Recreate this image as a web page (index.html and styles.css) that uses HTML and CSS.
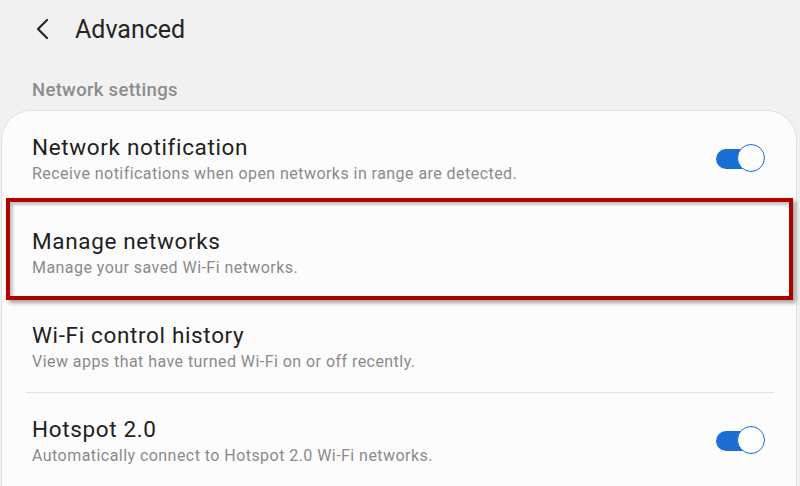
FILE: index.html
```html
<!DOCTYPE html>
<html lang="en">
<head>
    <meta charset="UTF-8">
    <meta name="viewport" content="width=device-width, initial-scale=1.0">
    <title>Advanced</title>
    <link rel="stylesheet" href="styles.css">
</head>
<body>
    <!-- Thanh tiêu đề -->
    <header class="top-bar">
        <svg class="back" width="16" height="24" viewBox="0 0 16 24">
            <path d="M13 3 L4 12 L13 21" fill="none" stroke="#262626" stroke-width="2.2" stroke-linecap="round" stroke-linejoin="round"/>
        </svg>
        <span class="title">Advanced</span>
    </header>

    <div class="section-label">Network settings</div>

    <!-- Danh sách cài đặt -->
    <div class="card">
        <div class="row">
            <div class="text">
                <div class="row-title">Network notification</div>
                <div class="row-sub">Receive notifications when open networks in range are detected.</div>
            </div>
            <div class="switch"><span class="thumb"></span></div>
        </div>

        <div class="row highlighted">
            <div class="text">
                <div class="row-title">Manage networks</div>
                <div class="row-sub">Manage your saved Wi-Fi networks.</div>
            </div>
            <div class="mark"></div>
        </div>

        <div class="row divided">
            <div class="text">
                <div class="row-title">Wi-Fi control history</div>
                <div class="row-sub">View apps that have turned Wi-Fi on or off recently.</div>
            </div>
        </div>

        <div class="row">
            <div class="text">
                <div class="row-title">Hotspot 2.0</div>
                <div class="row-sub">Automatically connect to Hotspot 2.0 Wi-Fi networks.</div>
            </div>
            <div class="switch"><span class="thumb"></span></div>
        </div>
    </div>
</body>
</html>
```

FILE: styles.css
```css
/* Kiểu dáng cơ bản */
body {
    margin: 0;
    width: 800px;
    height: 486px;
    overflow: hidden;
    background: #f1f1f1;
    font-family: Roboto, "Liberation Sans", sans-serif;
    color: #222;
}

/* Thanh tiêu đề */
.top-bar {
    height: 58px;
    display: flex;
    align-items: center;
    padding-left: 34px;
}

.back {
    margin-right: 25px;
}

.title {
    font-size: 25px;
    color: #252525;
}

.section-label {
    box-sizing: border-box;
    padding: 21px 32px 0;
    height: 52px;
    font-size: 18.5px;
    letter-spacing: 0.3px;
    font-weight: 500;
    color: #8c8c8c;
}

/* Thẻ danh sách */
.card {
    margin: 0 3px 0 1px;
    background: #fcfcfc;
    border: 1px solid #e2e2e2;
    border-bottom: none;
    border-radius: 30px 30px 0 0;
    height: 375px;
}

.row {
    position: relative;
    height: 94px;
    box-sizing: border-box;
    display: flex;
    align-items: center;
    padding: 0 31px 0 30px;
}

.row.divided {
    border-bottom: 1px solid #e3e3e3;
    margin: 0 22px 0 24px;
    padding-left: 6px;
}

.text {
    flex: 1;
    padding-top: 1px;
}

.row-title {
    font-size: 22.5px;
    letter-spacing: 0.65px;
    line-height: 28px;
    color: #212121;
}

.row-sub {
    margin-top: 3px;
    font-size: 16px;
    letter-spacing: 0.45px;
    line-height: 20px;
    color: #8a8a8a;
}

/* Công tắc */
.switch {
    position: relative;
    width: 49px;
    height: 29px;
}

.switch::before {
    content: "";
    position: absolute;
    left: 0;
    top: 5px;
    width: 38px;
    height: 20px;
    border-radius: 10px;
    background: #1a6fd5;
}

.thumb {
    position: absolute;
    right: 0;
    top: 0;
    width: 26px;
    height: 26px;
    border-radius: 50%;
    background: #fdfdfd;
    border: 1.5px solid #1a6fd5;
}

/* Khung đánh dấu màu đỏ */
.mark {
    position: absolute;
    left: 4px;
    right: 3px;
    top: -7px;
    bottom: -1px;
    border: 4px solid #b20000;
    box-shadow: 3px 3px 4px rgba(0, 0, 0, 0.35), inset 3px 3px 3px rgba(0, 0, 0, 0.22);
}
```
